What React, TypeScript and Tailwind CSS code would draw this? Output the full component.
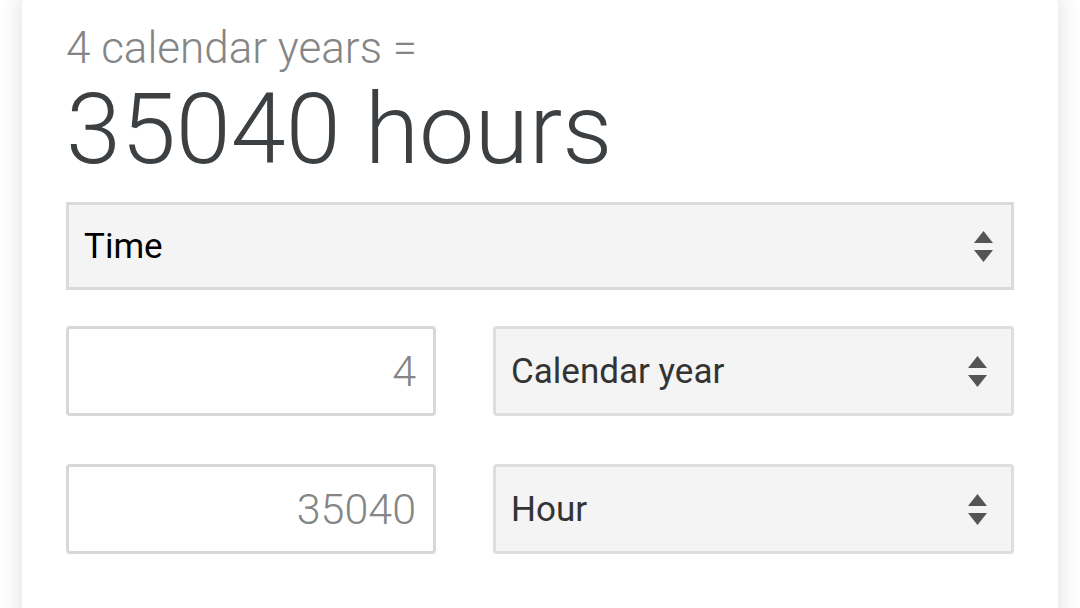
import React from "react";

function Arrows({ className = "" }: { className?: string }) {
  return (
    <svg className={className} width="19" height="31" viewBox="0 0 19 31" fill="#555555">
      <polygon points="9.5,0 19,12 0,12" />
      <polygon points="0,19 19,19 9.5,31" />
    </svg>
  );
}

function NumberBox({ value }: { value: string }) {
  return (
    <div className="w-[370px] h-[90px] border-[3px] border-[#d8d8d8] rounded-[4px] bg-white flex items-center justify-end pr-[17px]">
      <span className="text-[43px] font-light text-[#858585] leading-none">{value}</span>
    </div>
  );
}

function UnitSelect({ label }: { label: string }) {
  return (
    <div className="w-[521px] h-[90px] border-[3px] border-[#dedede] rounded-[4px] bg-[#f4f4f4] flex items-center justify-between pl-[15px] pr-[24px]">
      <span className="text-[35px] text-[#333333] leading-none">{label}</span>
      <Arrows />
    </div>
  );
}

export default function App() {
  return (
    <div
      className="w-[1080px] h-[608px] overflow-hidden bg-white"
      style={{ fontFamily: "Roboto, 'Noto Sans', sans-serif" }}
    >
      <div className="mx-[22px] mt-[-10px] h-[700px] rounded-[16px] bg-white shadow-[0_0_24px_rgba(0,0,0,0.14)] px-[44px] pt-[34px]">
        <div className="text-[44px] leading-[48px] font-light text-[#858585]">4 calendar years =</div>
        <div className="mt-[7px] text-[99px] leading-[100px] font-light text-[#3c4043]">35040 hours</div>
        <div className="mt-[23px] h-[88px] border-[3px] border-[#dadada] bg-[#f4f4f4] flex items-center justify-between pl-[15px] pr-[18px]">
          <span className="text-[35px] text-black leading-none">Time</span>
          <Arrows />
        </div>
        <div className="mt-[36px] flex justify-between">
          <NumberBox value="4" />
          <UnitSelect label="Calendar year" />
        </div>
        <div className="mt-[48px] flex justify-between">
          <NumberBox value="35040" />
          <UnitSelect label="Hour" />
        </div>
      </div>
    </div>
  );
}
